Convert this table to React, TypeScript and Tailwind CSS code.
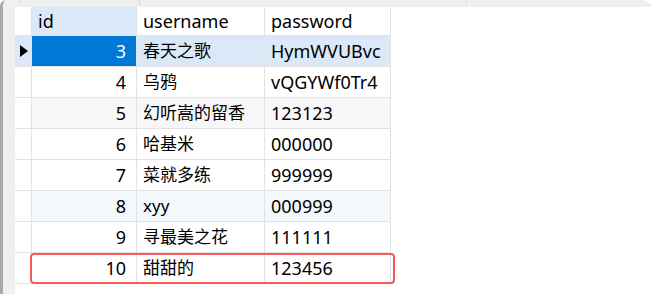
import { Fragment } from 'react';
import clsx from 'clsx';

type Row = {
  id: number;
  username: string;
  password: string;
  bg?: string;
};

const rows: Row[] = [
  { id: 3, username: '春天之歌', password: 'HymWVUBvc' },
  { id: 4, username: '乌鸦', password: 'vQGYWf0Tr4' },
  { id: 5, username: '幻听嵩的留香', password: '123123', bg: 'bg-[#f7f7f7]' },
  { id: 6, username: '哈基米', password: '000000' },
  { id: 7, username: '菜就多练', password: '999999' },
  { id: 8, username: 'xyy', password: '000999', bg: 'bg-[#f3f8fd]' },
  { id: 9, username: '寻最美之花', password: '111111' },
  { id: 10, username: '甜甜的', password: '123456' },
];

const cell = 'border-r border-b border-[#e3e3e3] flex items-center overflow-hidden whitespace-nowrap';

export default function App() {
  return (
    <div className="relative h-[294px] w-[653px] overflow-hidden bg-white font-['Noto_Sans','Noto_Sans_CJK_SC',sans-serif] text-[18px] text-black">
      <div className="flex h-full flex-col rounded-tl-[6px] rounded-tr-[12px] border-l-[3px] border-[#a9a9a9] bg-[#efefef] pl-[12px] pt-[7px]">
        <div className="flex-1 bg-white">
          <div className="grid grid-cols-[17px_105px_128px_126px] grid-rows-[29px_repeat(8,31px)]">
            {/* header */}
            <div className={cn(cell, 'bg-white')} />
            <div className={cn(cell, 'bg-[#dae8f7] pl-[6px]')}>id</div>
            <div className={cn(cell, 'pl-[6px]')}>username</div>
            <div className={cn(cell, 'pl-[6px]')}>password</div>

            {rows.map((r, i) => {
              const selected = i === 0;
              return (
                <Fragment key={r.id}>
                  <div className={cn(cell, selected ? 'bg-[#dae8f7]' : 'bg-white', 'justify-center')}>
                    {selected && (
                      <svg width="8" height="12" viewBox="0 0 8 12" className="ml-[1px]">
                        <path d="M0 0 L8 6 L0 12 Z" fill="#000" />
                      </svg>
                    )}
                  </div>
                  <div
                    className={cn(
                      cell,
                      'justify-end pr-[10px]',
                      selected ? 'bg-[#0078d7] text-white' : r.bg,
                    )}
                  >
                    {r.id}
                  </div>
                  <div className={cn(cell, 'pl-[6px] text-[17px]', selected ? 'bg-[#dae8f7]' : r.bg)}>
                    {r.username}
                  </div>
                  <div className={cn(cell, 'pl-[6px]', selected ? 'bg-[#dae8f7]' : r.bg)}>{r.password}</div>
                </Fragment>
              );
            })}
          </div>
        </div>
      </div>

      {/* top band separators */}
      <span className="absolute left-[20px] top-0 h-[5px] w-px bg-[#dcdcdc]" />
      <span className="absolute left-[139px] top-0 h-[5px] w-px bg-[#dcdcdc]" />
      <span className="absolute left-[466px] top-0 h-[5px] w-px bg-[#dcdcdc]" />

      {/* highlight box */}
      <div className="absolute left-[30px] top-[253px] h-[31px] w-[365px] rounded-[4px] border-2 border-[#f65a5a]" />
    </div>
  );
}

function cn(...args: (string | undefined | false)[]) {
  return clsx(args);
}
